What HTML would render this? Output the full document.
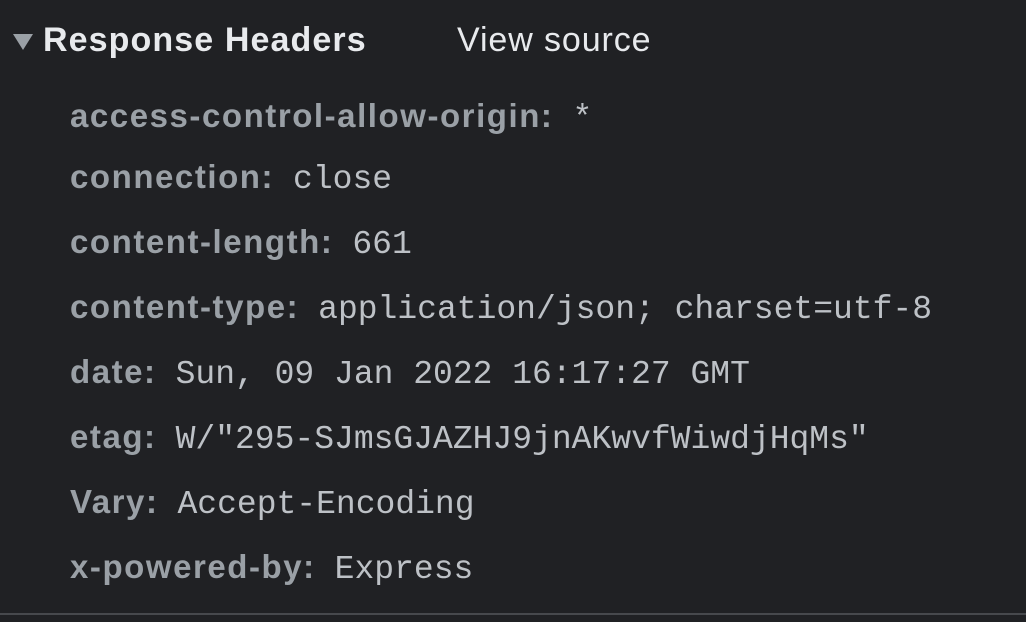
<!DOCTYPE html>
<html><head><style>
body{margin:0;width:1026px;height:622px;background:#202124;overflow:hidden;font-family:"Liberation Sans",sans-serif;position:relative}
.h{position:absolute;top:21px;left:43px;font-weight:bold;font-size:34px;letter-spacing:1.1px;color:#e8eaed;white-space:nowrap}
.tri{position:absolute;left:13px;top:34px;width:0;height:0;border-left:10px solid transparent;border-right:10px solid transparent;border-top:16px solid #9aa0a6}
.vs{position:absolute;top:21px;left:457px;font-size:34px;letter-spacing:0.9px;color:#e8eaed}
.r{position:absolute;left:70px;white-space:nowrap;height:40px;line-height:40px}
.k{font-weight:bold;font-size:33px;letter-spacing:1.55px;color:#9aa0a6}
.v{font-family:"Liberation Mono",monospace;font-size:33px;color:#bdc1c6;margin-left:19px}
.line{position:absolute;left:0;right:0;top:613px;height:2px;background:#47494d}
</style></head><body>
<div class="tri"></div>
<div class="h">Response Headers</div>
<div class="vs">View source</div>
<div class="r" style="top:96px"><span class="k">access-control-allow-origin:</span><span class="v">*</span></div>
<div class="r" style="top:157px"><span class="k">connection:</span><span class="v">close</span></div>
<div class="r" style="top:222px"><span class="k">content-length:</span><span class="v">661</span></div>
<div class="r" style="top:287px"><span class="k">content-type:</span><span class="v">application/json; charset=utf-8</span></div>
<div class="r" style="top:352px"><span class="k">date:</span><span class="v">Sun, 09 Jan 2022 16:17:27 GMT</span></div>
<div class="r" style="top:417px"><span class="k">etag:</span><span class="v">W/"295-SJmsGJAZHJ9jnAKwvfWiwdjHqMs"</span></div>
<div class="r" style="top:482px"><span class="k">Vary:</span><span class="v">Accept-Encoding</span></div>
<div class="r" style="top:547px"><span class="k">x-powered-by:</span><span class="v">Express</span></div>
<div class="line"></div>
</body></html>
